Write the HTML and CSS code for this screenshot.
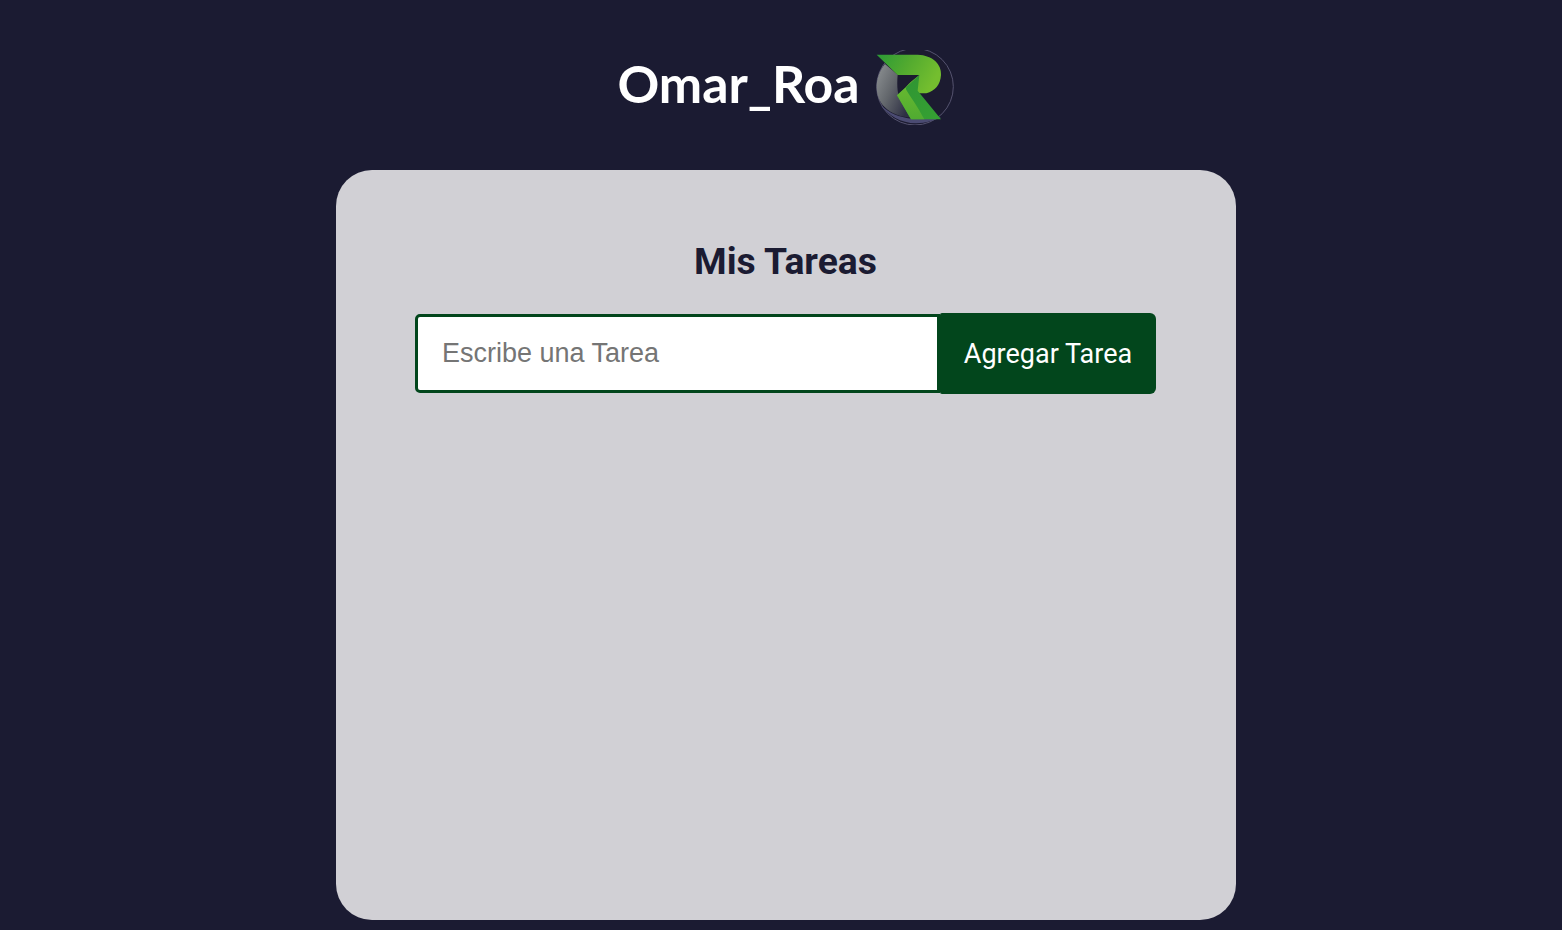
FILE: index.html
```html
<!DOCTYPE html>
<html lang="es">
<head>
<meta charset="utf-8">
<title>Mis Tareas</title>
<link rel="stylesheet" href="styles.css">
</head>
<body>
<header class="brand">
  <h2 class="brand-name">Omar_Roa</h2>
  <svg class="brand-logo" viewBox="45 30 234 225" aria-hidden="true">
    <defs>
      <linearGradient id="grey" x1="0" y1="0" x2="1" y2="0.7">
        <stop offset="0" stop-color="#8f9395"/>
        <stop offset="0.5" stop-color="#63676c"/>
        <stop offset="1" stop-color="#2e3044"/>
      </linearGradient>
      <linearGradient id="top" x1="0" y1="0" x2="1" y2="0.35">
        <stop offset="0" stop-color="#2b9a36"/>
        <stop offset="0.5" stop-color="#52aa2f"/>
        <stop offset="1" stop-color="#74be2f"/>
      </linearGradient>
      <linearGradient id="leg" x1="0.1" y1="0" x2="0.9" y2="1">
        <stop offset="0" stop-color="#2f9433"/>
        <stop offset="1" stop-color="#35a033"/>
      </linearGradient>
      <linearGradient id="ridge" x1="0.5" y1="0" x2="0.5" y2="1">
        <stop offset="0" stop-color="#6fbd2f"/>
        <stop offset="1" stop-color="#50ab31"/>
      </linearGradient>
    </defs>
    <circle cx="162" cy="140" r="115" fill="#1c1b30" stroke="#55536f" stroke-width="3"/>
    <path d="M72 72C40 110 38 170 70 200C90 222 125 232 150 232L128 192C112 182 106 150 110 104Z" fill="url(#grey)"/>
    <path d="M60 196C80 226 120 250 165 250C195 250 225 240 240 232L150 236C115 232 85 220 60 196Z" fill="#4b4b72"/>
    <path d="M47 44L170 44C215 46 242 72 240 105C238 135 222 152 196 160L175 160L135 140L175 105L110 105Z" fill="url(#top)"/>
    <path d="M175 105L108 166L150 238L240 238L170 152Z" fill="url(#leg)"/>
    <path d="M175 105C150 125 130 140 136 150C145 165 170 200 190 238L150 238L108 166Z" fill="url(#ridge)"/>
  </svg>
</header>
<main class="card">
  <h1 class="card-title">Mis Tareas</h1>
  <form class="task-form">
    <input class="task-input" type="text" placeholder="Escribe una Tarea">
    <button class="task-button" type="button">Agregar Tarea</button>
  </form>
</main>
</body>
</html>
```
FILE: styles.css
```css
* {
  box-sizing: border-box;
}

html,
body {
  height: 100%;
}

body {
  margin: 0;
  padding-left: 10px;
  background: #1b1b32;
  overflow: hidden;
}

.brand {
  display: flex;
  justify-content: center;
  align-items: center;
  gap: 16px;
  height: 170px;
  padding-top: 5px;
}

.brand-name {
  margin: 0 0 10px;
  font: 700 51.8px/60px Lato, sans-serif;
  color: #fff;
}

.brand-logo {
  display: block;
  width: 78px;
  height: 75px;
  margin-right: 1px;
}

.card {
  width: 900px;
  height: 750px;
  margin: 0 auto;
  padding: 70px 80px 0 79px;
  border-radius: 36px;
  background: #d1d0d5;
}

.card-title {
  margin: 0 0 31px;
  font: 700 37.3px/42px Roboto, sans-serif;
  text-align: center;
  color: #1b1b32;
}

.task-form {
  display: flex;
  align-items: center;
}

.task-input {
  width: 525px;
  height: 79px;
  padding: 0 24px;
  border: 3px solid #02461c;
  border-radius: 5px 0 0 5px;
  background: #fff;
  font: 27px "Liberation Sans", Arial, sans-serif;
  outline: none;
}

.task-input::placeholder {
  color: #757575;
  opacity: 1;
}

.task-button {
  width: 216px;
  height: 81px;
  border: 0;
  border-radius: 2px 6px 6px 2px;
  background: #02461c;
  color: #fff;
  font: 400 27px Roboto, sans-serif;
}
```
